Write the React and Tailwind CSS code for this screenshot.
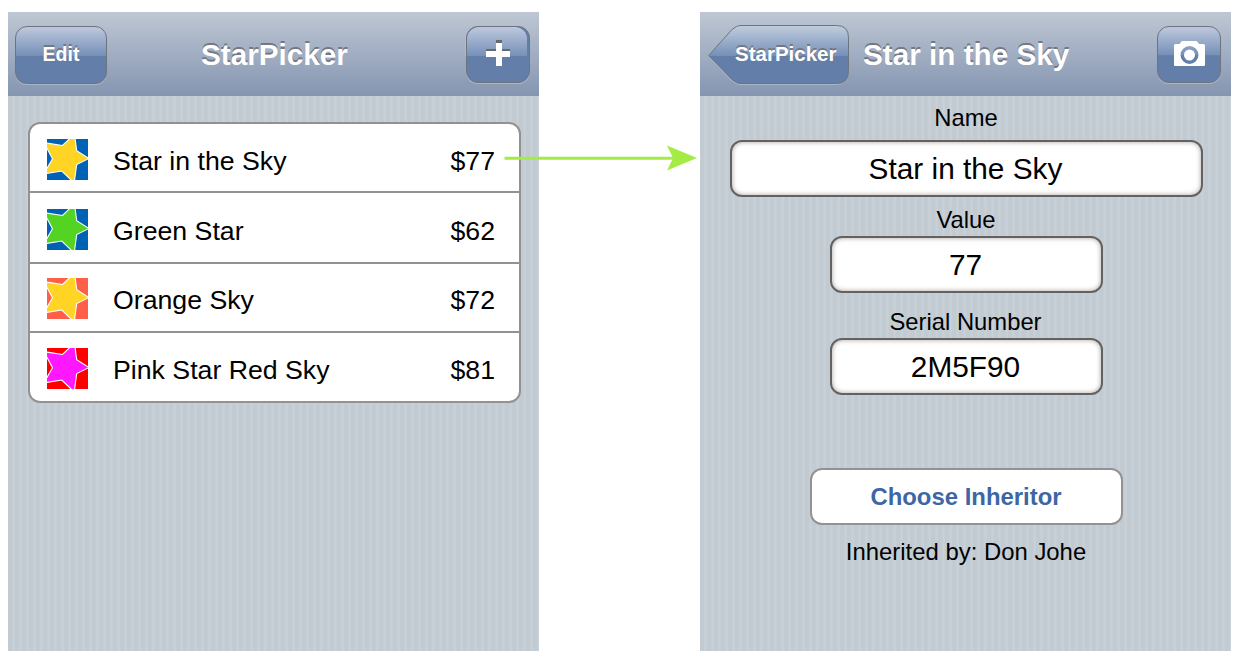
import React from "react";

const stripes =
  "bg-[repeating-linear-gradient(90deg,#c3cbd2_0px,#c3cbd2_4px,#c9d1d8_5px,#c9d1d8_6px,#c5cdd3_7px)]";

const navButton =
  "flex items-center justify-center rounded-[12px] border border-[#6d747e] shadow-[0_1px_0_#a9b6c9]";

const glossy =
  "bg-[linear-gradient(180deg,#bdc8dd_0%,#7690b8_51%,#637fa9_52%,#637fa9_100%)]";

const engraved = "[text-shadow:0_-2px_0_#747880]";

const stars = [
  { name: "Star in the Sky", price: "$77", star: "#ffd424", sky: "#0062b4", box: "h-[69px] pt-[15px]" },
  { name: "Green Star", price: "$62", star: "#54d422", sky: "#0062b4", box: "h-[71px] pt-[16px]" },
  { name: "Orange Sky", price: "$72", star: "#ffd424", sky: "#ff5e48", box: "h-[69px] pt-[14px]" },
  { name: "Pink Star Red Sky", price: "$81", star: "#ff18ff", sky: "#ff0000", box: "h-[68px] pt-[15px]" },
];

function StarIcon({ star, sky }) {
  return (
    <svg width="41" height="41" viewBox="0 0 41 41" className="block shrink-0">
      <rect width="41" height="41" fill={sky} />
      <path
        d="M42 19.500L29.700 25.500L27.200 44L14.800 32L-3 34.800L5.500 19.700L-3 3.700L15.500 6.500L27.500 -5L29.700 11.700Z"
        fill={star}
        stroke="#fff"
        strokeWidth="1.100"
      />
    </svg>
  );
}

function Phone({ header, children }) {
  return (
    <section className={`flex h-[639px] w-[531px] flex-col ${stripes}`}>
      <header className="flex h-[84px] shrink-0 items-start bg-gradient-to-b from-[#bec7d3] to-[#8595b1]">
        {header}
      </header>
      {children}
    </section>
  );
}

function PlusIcon() {
  return (
    <svg width="24" height="26" viewBox="0 0 24 26" className="relative">
      <path d="M10 0h6v9h8v6H16v8H10v-8H0V9h10z" fill="#666a70" />
      <path d="M10 3h6v8h8v6H16v9H10v-9H0v-6h10z" fill="#fff" />
    </svg>
  );
}

function CameraIcon() {
  return (
    <svg width="31" height="25" viewBox="0 0 31 25">
      <path
        fillRule="evenodd"
        fill="#fff"
        d="M1.500 3H5.500L7 1Q7.500 0 8.500 0H22Q23 0 23.500 1L25 3H29.500Q31 3 31 4.500V24Q31 25 30 25H1Q0 25 0 24V4.500Q0 3 1.500 3ZM15.500 5A9 9 0 1 0 15.500 23A9 9 0 1 0 15.500 5Z"
      />
      <circle cx="15.500" cy="14" r="5.500" fill="#fff" />
    </svg>
  );
}

function BackButton({ label }) {
  return (
    <button className="relative ml-2 mt-3 block h-[61px] w-[142px]">
      <svg width="142" height="61" viewBox="0 0 142 61" className="absolute inset-0">
        <defs>
          <linearGradient id="back" x1="0" y1="0" x2="0" y2="1">
            <stop offset="0" stopColor="#c1cddd" />
            <stop offset="0.520" stopColor="#7690b8" />
            <stop offset="0.530" stopColor="#637fa9" />
            <stop offset="1" stopColor="#637fa9" />
          </linearGradient>
        </defs>
        <path d="M1 32.500L24 57Q29 60.500 32 60.500H128Q140 60.500 140.500 48" fill="none" stroke="#a9b6c9" />
        <path
          d="M0.700 31.500L24 5.500Q29 1.500 32 1.500H128.500Q140.500 1.500 140.500 13.500V47.500Q140.500 59.500 128.500 59.500H32Q29 59.500 24 55.500Z"
          fill="url(#back)"
          stroke="#6d747e"
        />
      </svg>
      <span className={`absolute left-[27px] top-[15px] text-[20.5px] leading-[30px] font-bold text-white ${engraved}`}>
        {label}
      </span>
    </button>
  );
}

function Field({ label, value, labelClass, boxClass }) {
  return (
    <label className="flex flex-col items-center">
      <span className={`block text-[23.8px] leading-[28px] ${labelClass}`}>{label}</span>
      <span
        className={`flex h-[57px] items-center justify-center rounded-[12px] border-2 border-[#626262] bg-white pr-[2px] text-[29.8px] leading-none shadow-[inset_0_0_5px_#a8a29c] ${boxClass}`}
      >
        {value}
      </span>
    </label>
  );
}

export default function App() {
  return (
    <main className="relative flex h-[660px] w-[1242px] gap-[161px] bg-white pl-2 pt-3 font-['Liberation_Sans',Arial,sans-serif] text-black">
      <Phone
        header={
          <>
            <button className={`ml-[7px] mt-[14px] h-[58px] w-[92px] ${navButton} ${glossy}`}>
              <span className={`-mt-[3px] text-[19.5px] leading-[30px] font-bold text-white ${engraved}`}>Edit</span>
            </button>
            <h1 className={`ml-[94px] mt-[25px] w-[147px] whitespace-nowrap text-[29.7px] leading-[36px] font-bold text-white ${engraved}`}>
              StarPicker
            </h1>
            <button className={`relative ml-[118px] mt-[14px] h-[57px] w-[64px] bg-[#637fa9] pb-[3px] pr-px ${navButton}`}>
              <span className="absolute left-0 top-0 h-[29px] w-[60px] rounded-t-[12px] bg-[linear-gradient(180deg,#bdc8dd,#7690b8)]" />
              <span className="absolute -left-[2px] top-[10px] h-[19px] w-px bg-[#b0bccd]" />
              <PlusIcon />
            </button>
          </>
        }
      >
        <ul className="ml-5 mt-[26px] w-[493px] divide-y-2 divide-[#929292] overflow-hidden rounded-[12px] border-2 border-[#929292] bg-white">
          {stars.map((s) => (
            <li key={s.name} className={`flex items-start pl-[17px] pr-[24px] text-[26.700px] ${s.box}`}>
              <StarIcon star={s.star} sky={s.sky} />
              <span className="ml-[25px] mt-[2px] grow leading-[41px]">{s.name}</span>
              <span className="mt-[2px] leading-[41px]">{s.price}</span>
            </li>
          ))}
        </ul>
      </Phone>

      <Phone
        header={
          <>
            <BackButton label="StarPicker" />
            <h1 className={`ml-[13px] mt-[25px] w-[209px] whitespace-nowrap text-[29.7px] leading-[36px] font-bold text-white ${engraved}`}>
              Star in the Sky
            </h1>
            <button className={`ml-[85px] mt-[14px] h-[57px] w-[64px] pb-[2px] ${navButton} ${glossy}`}>
              <CameraIcon />
            </button>
          </>
        }
      >
        <div className="flex flex-col items-center pl-[2px] pt-[8px]">
          <Field label="Name" value="Star in the Sky" labelClass="mb-[8px] mr-px" boxClass="w-[473px]" />
          <div className="h-[9px]" />
          <Field label="Value" value="77" labelClass="mb-[2px] mr-px" boxClass="w-[273px]" />
          <div className="h-[15px]" />
          <Field label="Serial Number" value="2M5F90" labelClass="mb-[2px] mr-[2px]" boxClass="w-[273px]" />
          <button className="mt-[73px] h-[57px] w-[313px] rounded-[12px] border-2 border-[#929292] bg-white pr-px text-[23.9px] font-bold text-[#3d66a4]">
            Choose Inheritor
          </button>
          <p className="mt-[13px] pr-px text-[23.9px] leading-[28px]">Inherited by: Don Johe</p>
        </div>
      </Phone>

      <svg width="194" height="26" viewBox="0 0 194 26" className="absolute left-[504px] top-[145px]">
        <path d="M0.500 13.200H172" stroke="#a4ec45" strokeWidth="3" />
        <path d="M193 13L163 0.500L169 13L163 25.500Z" fill="#a4ec45" />
      </svg>
    </main>
  );
}
